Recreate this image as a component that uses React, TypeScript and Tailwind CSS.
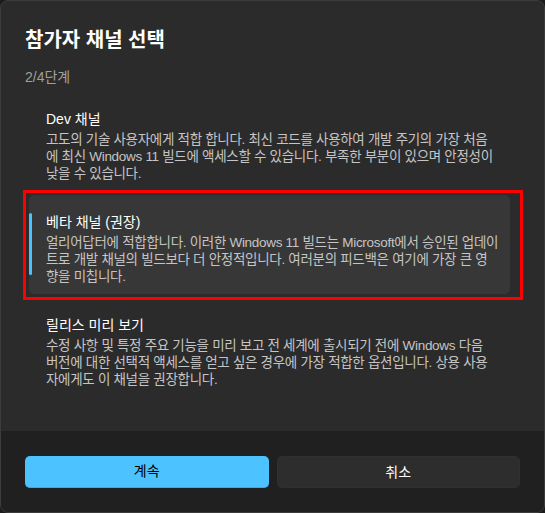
const channels = [
  {
    id: 'dev',
    title: 'Dev 채널',
    lines: [
      '고도의 기술 사용자에게 적합 합니다. 최신 코드를 사용하여 개발 주기의 가장 처음',
      '에 최신 Windows 11 빌드에 액세스할 수 있습니다. 부족한 부분이 있으며 안정성이',
      '낮을 수 있습니다.',
    ],
  },
  {
    id: 'beta',
    title: '베타 채널 (권장)',
    lines: [
      '얼리어답터에 적합합니다. 이러한 Windows 11 빌드는 Microsoft에서 승인된 업데이',
      '트로 개발 채널의 빌드보다 더 안정적입니다. 여러분의 피드백은 여기에 가장 큰 영',
      '향을 미칩니다.',
    ],
  },
  {
    id: 'release',
    title: '릴리스 미리 보기',
    lines: [
      '수정 사항 및 특정 주요 기능을 미리 보고 전 세계에 출시되기 전에 Windows 다음',
      '버전에 대한 선택적 액세스를 얻고 싶은 경우에 가장 적합한 옵션입니다. 상용 사용',
      '자에게도 이 채널을 권장합니다.',
    ],
  },
];

export default function App() {
  const selected = 'beta';

  return (
    <div className="w-[545px] h-[513px] bg-[#1c1c1c] font-['Liberation_Sans','Noto_Sans_CJK_KR',sans-serif]">
      <div className="flex h-full flex-col overflow-hidden rounded-lg border border-[#3c3c3c] bg-[#2b2b2b]">
        {/* Body */}
        <div className="flex-1 px-6 pt-[25px]">
          <h1 className="text-[20px] font-semibold leading-[28px] text-white">참가자 채널 선택</h1>
          <p className="mt-[13px] text-[14px] leading-5 text-[#a0a0a0]">2/4단계</p>

          <div className="mt-[5px] flex flex-col gap-1 pl-1 pr-[10px]">
            {channels.map((c) => {
              const active = c.id === selected;
              return (
                <div
                  key={c.id}
                  className={`relative rounded-[5px] pl-[17px] pr-3 pt-[17px] pb-[9px] ${active ? 'bg-[#373737]' : ''}`}
                >
                  {active && (
                    <>
                      <span className="absolute left-0 top-[18px] bottom-[19px] w-[3px] rounded-full bg-[#4cc2ff]" />
                      <span className="pointer-events-none absolute -left-[6px] -right-[13px] -top-[5px] -bottom-[6px] border-[3px] border-[#ff0000]" />
                    </>
                  )}
                  <h2 className="text-[14px] leading-5 text-white">{c.title}</h2>
                  <p className="mt-[2px] whitespace-nowrap text-[13.5px] leading-[17px] tracking-[-0.3px] text-[#c5c5c5]">
                    {c.lines.map((l) => (
                      <span key={l} className="block">
                        {l}
                      </span>
                    ))}
                  </p>
                </div>
              );
            })}
          </div>
        </div>

        {/* Footer */}
        <div className="grid grid-cols-2 gap-2 border-t border-[#1f1f1f] bg-[#202020] px-6 py-6">
          <button className="h-8 rounded-[5px] border-b border-[#45a9dd] bg-[#4cc2ff] text-[14px] text-black">
            계속
          </button>
          <button className="h-8 rounded-[5px] border border-[#303030] bg-[#2d2d2d] text-[14px] text-white">
            취소
          </button>
        </div>
      </div>
    </div>
  );
}
